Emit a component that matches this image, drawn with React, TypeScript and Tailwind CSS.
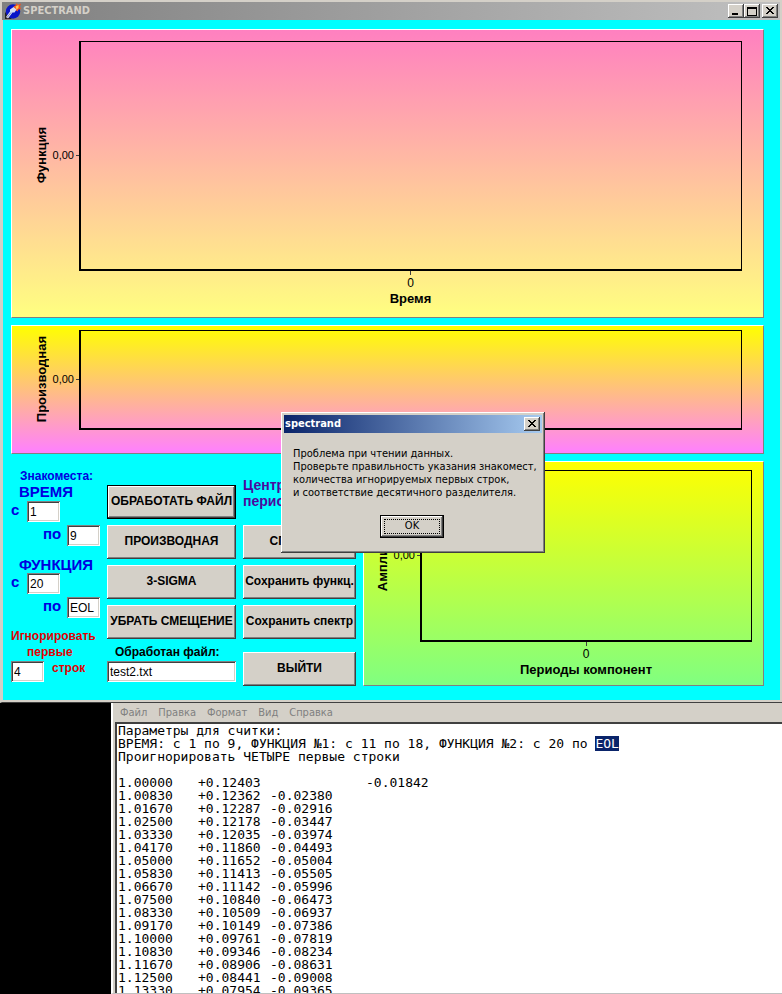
import type { ReactNode } from 'react';

const RAISED =
  'bg-[#d4d0c8] shadow-[inset_-1px_-1px_0_#404040,inset_1px_1px_0_#ffffff,inset_-2px_-2px_0_#808080]';
const SUNKEN =
  'bg-white shadow-[inset_1px_1px_0_#808080,inset_-1px_-1px_0_#ffffff,inset_2px_2px_0_#404040,inset_-2px_-2px_0_#d4d0c8]';
const SANS = "font-['Liberation_Sans',Arial,sans-serif]";
const UI = "font-['DejaVu_Sans_Condensed','Noto_Sans',Tahoma,sans-serif]";

const rows: string[][] = [
  ['1.00000', '+0.12403', '', '-0.01842'],
  ['1.00830', '+0.12362', '-0.02380', ''],
  ['1.01670', '+0.12287', '-0.02916', ''],
  ['1.02500', '+0.12178', '-0.03447', ''],
  ['1.03330', '+0.12035', '-0.03974', ''],
  ['1.04170', '+0.11860', '-0.04493', ''],
  ['1.05000', '+0.11652', '-0.05004', ''],
  ['1.05830', '+0.11413', '-0.05505', ''],
  ['1.06670', '+0.11142', '-0.05996', ''],
  ['1.07500', '+0.10840', '-0.06473', ''],
  ['1.08330', '+0.10509', '-0.06937', ''],
  ['1.09170', '+0.10149', '-0.07386', ''],
  ['1.10000', '+0.09761', '-0.07819', ''],
  ['1.10830', '+0.09346', '-0.08234', ''],
  ['1.11670', '+0.08906', '-0.08631', ''],
  ['1.12500', '+0.08441', '-0.09008', ''],
  ['1.13330', '+0.07954', '-0.09365', ''],
];

function AppIcon() {
  return (
    <svg viewBox="0 0 16 16" className="h-4 w-4 shrink-0" aria-hidden="true">
      <path d="M0 9 L0 16 L7 16 Z" fill="#222" />
      <circle cx="8" cy="8.500" r="7.200" fill="#0a14c8" />
      <path d="M8.500 3.500 L11 2 L11.500 0 L13 2 L16 0.500 L15 3.500 L16 6 L13.500 6.500 L12.500 8.500 L10.500 7 Z" fill="#f4501c" />
      <path d="M10.500 3.500 L13.500 2 L13.500 5 L11.500 6.500 Z" fill="#ffc850" />
      <path d="M1 14 L5 8.500 L5 6.500 L8.500 4 L11.500 6.500 L9.500 9.500 L7.500 9.500 L3 15.500 Z" fill="#d8dcf4" />
      <path d="M2 14.500 L6 9.500" stroke="#8088b8" strokeWidth="1" />
    </svg>
  );
}

function CaptionButton({ label, className = '', children }: { label: string; className?: string; children: ReactNode }) {
  return (
    <button type="button" aria-label={label} className={`flex h-3.5 w-4 items-center justify-center ${RAISED} ${className}`}>
      <svg viewBox="0 0 12 10" className="h-2.5 w-3" fill="none" stroke="#000" shapeRendering="crispEdges">
        {children}
      </svg>
    </button>
  );
}

function CloseGlyph() {
  return <path d="M2 1 L9 8 M3 1 L10 8 M9 1 L2 8 M10 1 L3 8" />;
}

type ChartProps = {
  yLabel: string;
  xLabel?: string;
  className: string;
  labelColumn: string;
  axisIndent?: string;
  plotClass: string;
};

function Chart({ yLabel, xLabel, className, labelColumn, axisIndent = '', plotClass }: ChartProps) {
  return (
    <section className={`flex flex-col border border-t-white border-l-white border-r-[#808080] border-b-[#808080] ${SANS} ${className}`}>
      <div className="flex">
        <div className={`flex shrink-0 items-center justify-end pb-0.5 ${labelColumn}`}>
          <span className="rotate-180 text-[13px] leading-4 font-bold whitespace-nowrap [writing-mode:vertical-rl]">{yLabel}</span>
          <span className="w-6 text-right text-[11px] leading-4">0,00</span>
          <span className="ml-0.5 h-px w-[3px] bg-[#404040]" />
        </div>
        <div className={`flex-1 border-t border-r border-b-2 border-l-2 border-black ${plotClass}`} />
      </div>
      {xLabel && (
        <div className={`flex flex-col items-center ${axisIndent}`}>
          <span className="h-1 w-px bg-[#404040]" />
          <span className="text-[12px] leading-4">0</span>
          <span className="text-[13px] leading-4 font-bold">{xLabel}</span>
        </div>
      )}
    </section>
  );
}

function Field({ id, label, value, indent = false }: { id: string; label: string; value: string; indent?: boolean }) {
  return (
    <div className={`flex h-[21px] ${indent ? 'pl-8' : ''}`}>
      <label htmlFor={id} className={`text-[15px] leading-[18px] font-bold text-[#0000e0] ${indent ? 'w-6' : 'w-4'}`}>
        {label}
      </label>
      <input id={id} defaultValue={value} className={`h-[21px] w-[33px] px-[3px] text-[12px] text-black ${SUNKEN}`} />
    </div>
  );
}

function PushButton({ children, isDefault = false }: { children: ReactNode; isDefault?: boolean }) {
  return (
    <button
      type="button"
      className={`h-[34px] w-full pb-0.5 text-[12px] font-bold whitespace-nowrap ${RAISED} ${isDefault ? 'border border-black' : ''}`}
    >
      {children}
    </button>
  );
}

function Controls() {
  return (
    <div className={`flex shrink-0 gap-[7px] ${SANS}`}>
      <div className="flex w-[89px] flex-col whitespace-nowrap text-[#0000e0]">
        <p className="mt-[7px] pl-[9px] text-[12px] leading-4 font-bold">Знакоместа:</p>
        <p className="pl-2 text-[15px] leading-4 font-bold">ВРЕМЯ</p>
        <div className="mt-px flex flex-col gap-[3px]">
          <Field id="time-from" label="с" value="1" />
          <Field id="time-to" label="по" value="9" indent />
        </div>
        <p className="mt-[11px] pl-2 text-[15px] leading-4 font-bold">ФУНКЦИЯ</p>
        <div className="flex flex-col gap-[3px]">
          <Field id="func-from" label="с" value="20" />
          <Field id="func-to" label="по" value="EOL" indent />
        </div>
        <label htmlFor="skip" className="mt-[10px] text-[12px] leading-4 font-bold text-[#e00000]">
          Игнорировать
          <span className="block pl-4">первые</span>
        </label>
        <div className="flex gap-2">
          <input id="skip" defaultValue="4" className={`mt-px h-[21px] w-[33px] px-[3px] text-[12px] text-black ${SUNKEN}`} />
          <span className="text-[12px] leading-4 font-bold text-[#e00000]">строк</span>
        </div>
      </div>

      <div className="flex w-[129px] flex-col pt-6">
        <div className="flex flex-col gap-1.5">
          <PushButton isDefault>ОБРАБОТАТЬ ФАЙЛ</PushButton>
          <PushButton>ПРОИЗВОДНАЯ</PushButton>
          <PushButton>3-SIGMA</PushButton>
          <PushButton>УБРАТЬ СМЕЩЕНИЕ</PushButton>
        </div>
        <label htmlFor="processed" className="mt-1 pl-2 text-[12px] leading-[18px] font-bold">
          Обработан файл:
        </label>
        <input id="processed" defaultValue="test2.txt" className={`h-[21px] w-full px-[3px] text-[12px] ${SUNKEN}`} />
      </div>

      <div className="flex w-[113px] flex-col pt-4">
        <p className="h-12 text-[14px] leading-4 font-bold text-[#4b0a9e]">Центральный период</p>
        <div className="flex flex-col gap-1.5">
          <PushButton>СПЕКТРЫ</PushButton>
          <PushButton>Сохранить функц.</PushButton>
          <PushButton>Сохранить спектр</PushButton>
        </div>
        <div className="mt-[13px]">
          <PushButton>ВЫЙТИ</PushButton>
        </div>
      </div>
    </div>
  );
}

function MessageDialog() {
  return (
    <div
      role="dialog"
      aria-label="spectrand"
      className={`absolute top-[412px] left-[281px] w-[264px] p-[3px] ${RAISED} ${UI}`}
    >
      <div className="flex h-[18px] items-center justify-between bg-linear-to-r/srgb from-[#0a246a] to-[#a6caf0] pr-0.5 pl-px">
        <span className="text-[11px] leading-4 font-bold text-white">spectrand</span>
        <CaptionButton label="Закрыть">
          <CloseGlyph />
        </CaptionButton>
      </div>
      <p className="mt-[14px] pl-[9px] text-[11px] leading-[13px] whitespace-nowrap">
        Проблема при чтении данных.
        <br />
        Проверьте правильность указания знакомест,
        <br />
        количества игнорируемых первых строк,
        <br />
        и соответствие десятичного разделителя.
      </p>
      <div className="flex justify-center pt-4 pr-0.5 pb-3">
        <button type="button" className={`h-[23px] w-16 border border-black p-[3px] text-[11px] ${RAISED}`}>
          <span className="flex h-full items-center justify-center border border-dotted border-black">OK</span>
        </button>
      </div>
    </div>
  );
}

function Notepad() {
  return (
    <div className="flex min-h-0 flex-1 bg-black pl-[111px]">
      <div className="flex min-w-0 flex-1 flex-col border-b border-l-2 border-b-[#c0c0c0] border-l-white bg-[#d4d0c8] pl-0.5">
        <nav className={`flex h-[19px] shrink-0 gap-[11px] pl-[5px] text-[11px] leading-[18px] text-[#808080] ${UI}`}>
          <button type="button">Файл</button>
          <button type="button">Правка</button>
          <button type="button">Формат</button>
          <button type="button">Вид</button>
          <button type="button">Справка</button>
        </nav>
        <div className="min-h-0 flex-1 overflow-hidden border-t-2 border-l-2 border-[#404040] bg-white pl-px font-['DejaVu_Sans_Mono','Liberation_Mono',monospace] text-[13px] leading-[13px] whitespace-nowrap">
          <p>Параметры для считки:</p>
          <p>
            ВРЕМЯ: с 1 по 9, ФУНКЦИЯ №1: с 11 по 18, ФУНКЦИЯ №2: с 20 по{' '}
            <mark className="bg-[#0a246a] text-white">EOL</mark>
          </p>
          <p>Проигнорировать ЧЕТЫРЕ первые строки</p>
          <table className="mt-[13px] table-fixed border-collapse">
            <colgroup>
              <col className="w-20" />
              <col className="w-[72px]" />
              <col className="w-24" />
              <col className="w-20" />
            </colgroup>
            <tbody>
              {rows.map((cells) => (
                <tr key={cells[0]} className="h-[13px]">
                  {cells.map((cell, i) => (
                    <td key={i} className="p-0">
                      {cell}
                    </td>
                  ))}
                </tr>
              ))}
            </tbody>
          </table>
        </div>
      </div>
    </div>
  );
}

export default function App() {
  return (
    <div className="relative flex h-screen flex-col overflow-hidden bg-black text-black">
      <main className="flex shrink-0 flex-col border-t-2 border-b border-l-2 border-t-[#d4d0c8] border-b-[#404040] border-l-[#d4d0c8] bg-[#d4d0c8] pr-0.5 pb-0.5">
        <header className={`flex h-[18px] items-center justify-between bg-linear-to-r/srgb from-[#808080] to-[#c0c0c0] pr-0.5 pl-[3px] ${UI}`}>
          <div className="flex items-center gap-0.5">
            <AppIcon />
            <h1 className="text-[11px] leading-4 font-bold text-[#d4d0c8]">SPECTRAND</h1>
          </div>
          <div className="flex">
            <CaptionButton label="Свернуть">
              <path d="M2 8 H8 M2 7 H8" />
            </CaptionButton>
            <CaptionButton label="Развернуть">
              <path d="M1.500 1 H10.500 M1.500 2 H10.500 M1.500 1 V9 H10.500 V1" />
            </CaptionButton>
            <CaptionButton label="Закрыть" className="ml-0.5">
              <CloseGlyph />
            </CaptionButton>
          </div>
        </header>
        <div className="ml-px flex flex-col gap-[7px] bg-[#00ffff] pt-[9px] pr-4 pb-[14px] pl-2">
          <Chart
            yLabel="Функция"
            xLabel="Время"
            className="bg-linear-to-b/srgb from-[#ff80c0] to-[#ffff80] pt-[11px] pr-[21px] pb-[10px]"
            labelColumn="w-[67px]"
            axisIndent="pl-[67px]"
            plotClass="h-[230px]"
          />
          <Chart
            yLabel="Производная"
            className="bg-linear-to-b/srgb from-[#ffff00] to-[#ff80ff] pt-1 pr-[21px] pb-[23px]"
            labelColumn="w-[67px]"
            plotClass="h-[100px]"
          />
          <div className="flex gap-[7px]">
            <Controls />
            <Chart
              yLabel="Амплитуда"
              xLabel="Периоды компонент"
              className="min-w-0 flex-1 bg-linear-to-b/srgb from-[#ffff00] to-[#80ff80] pt-2 pr-[11px] pb-[7px]"
              labelColumn="w-[56px]"
              axisIndent="pl-[56px]"
              plotClass="h-[172px]"
            />
          </div>
        </div>
      </main>
      <Notepad />
      <MessageDialog />
    </div>
  );
}
